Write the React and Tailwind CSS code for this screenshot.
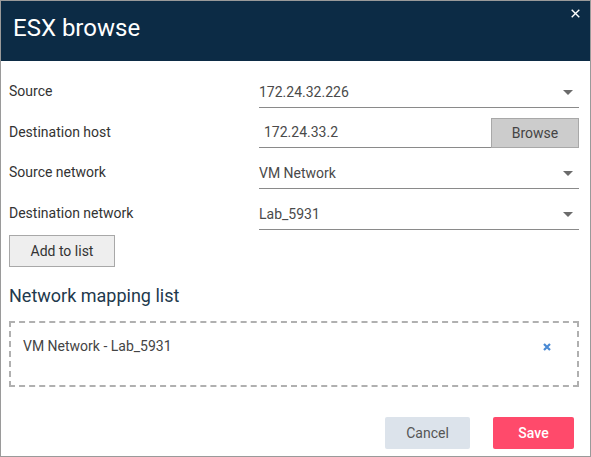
import { useState } from 'react'

/**
 * ESX browse dialog — source / destination pickers and a network mapping list.
 */

function Caret() {
  return (
    <svg width="10" height="5" viewBox="0 0 10 5" className="shrink-0">
      <path d="M0 0 L10 0 L5 5 Z" fill="#6b6b6b" />
    </svg>
  )
}

function SelectField({ value }) {
  return (
    <div className="flex h-[31px] flex-1 items-center justify-between border-b border-[#8a8a8a] pr-[6px]">
      <span className="text-[14px] text-[#4a4a4a]">{value}</span>
      <Caret />
    </div>
  )
}

function Row({ label, children }) {
  return (
    <div className="flex items-start">
      <div className="w-[250px] pt-[4px] text-[14px] text-[#333]">{label}</div>
      {children}
    </div>
  )
}

export default function App() {
  const [mappings, setMappings] = useState(['VM Network - Lab_5931'])

  return (
    <div
      className="flex h-[457px] w-[591px] flex-col border border-[#9a9a9a] bg-white"
      style={{ fontFamily: 'Roboto, "Liberation Sans", sans-serif' }}
    >
      {/* ── Header ─────────────────────────────────────────────── */}
      <div className="relative flex h-[60px] shrink-0 items-center bg-[#0c2b45] pl-[12px]">
        <h1 className="pb-[6px] text-[24px] text-white">ESX browse</h1>
        <button className="absolute right-[10px] top-[8px]">
          <svg width="9" height="9" viewBox="0 0 9 9">
            <path d="M0.7 0.7 L8.3 8.3 M8.3 0.7 L0.7 8.3" stroke="#fff" strokeWidth="1.4" />
          </svg>
        </button>
      </div>

      {/* ── Body ───────────────────────────────────────────────── */}
      <div className="flex flex-1 flex-col px-[8px] pt-[16px]">
        <div className="flex flex-col gap-[10px] pr-[3px]">
          <Row label="Source">
            <SelectField value="172.24.32.226" />
          </Row>
          <Row label="Destination host">
            <div className="flex flex-1 items-end">
              <div className="flex h-[30px] flex-1 items-center border-b border-[#8a8a8a] pl-[5px] text-[14px] text-[#4a4a4a]">
                172.24.33.2
              </div>
              <button className="h-[30px] w-[88px] border border-[#a8a8a8] bg-[#cccccc] text-[14px] text-[#444]">
                Browse
              </button>
            </div>
          </Row>
          <Row label="Source network">
            <SelectField value="VM Network" />
          </Row>
          <Row label="Destination network">
            <SelectField value="Lab_5931" />
          </Row>
        </div>

        <button className="mt-[5px] h-[32px] w-[106px] border border-[#a8a8a8] bg-[#eeeeee] text-[14px] text-[#333]">
          Add to list
        </button>

        <h2 className="mt-[17px] text-[18px] leading-[24px] text-[#22394d]">Network mapping list</h2>

        <div className="mt-[13px] mr-[3px] h-[66px] border-2 border-dashed border-[#b0b0b0] px-[12px] pt-[13px]">
          {mappings.map(m => (
            <div key={m} className="flex items-center justify-between pr-[14px]">
              <span className="text-[14px] text-[#444]">{m}</span>
              <button onClick={() => setMappings(ms => ms.filter(x => x !== m))}>
                <svg width="8" height="8" viewBox="0 0 8 8">
                  <path d="M1 1 L7 7 M7 1 L1 7" stroke="#4a8ad4" strokeWidth="2.2" />
                </svg>
              </button>
            </div>
          ))}
        </div>

        <div className="mt-[30px] flex justify-end gap-[23px] pr-[8px]">
          <button className="h-[32px] w-[85px] rounded-[2px] bg-[#dce3eb] text-[14px] text-[#555]">
            Cancel
          </button>
          <button className="h-[32px] w-[81px] rounded-[2px] bg-[#ff4a6b] text-[14px] font-medium text-white">
            Save
          </button>
        </div>
      </div>
    </div>
  )
}
